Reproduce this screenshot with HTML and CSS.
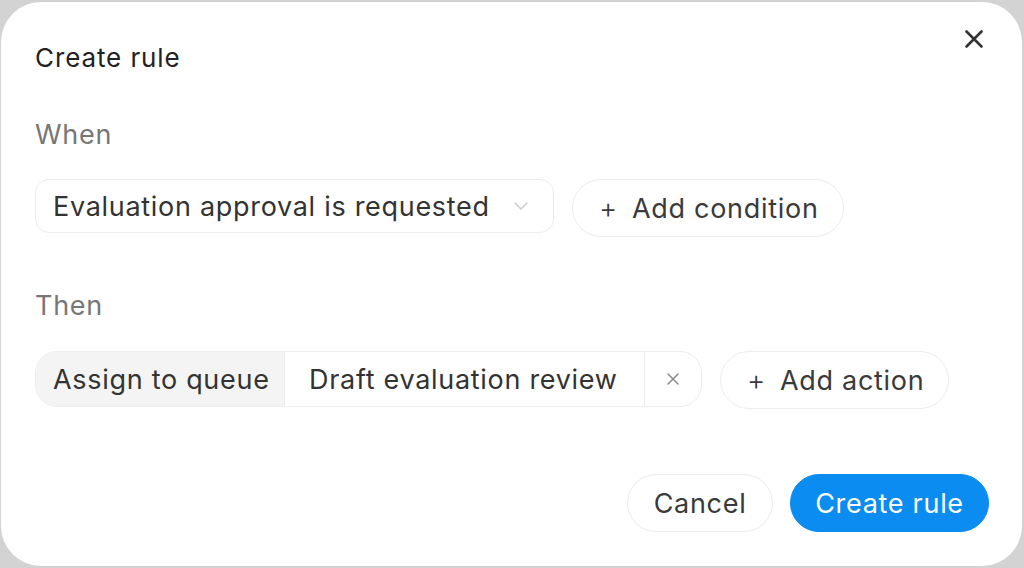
FILE: index.html
```html
<!DOCTYPE html>
<html>
<head>
<meta charset="utf-8">
<link rel="stylesheet" href="styles.css">
</head>
<body>
<div class="dialog">
  <button class="close" aria-label="Close">
    <svg width="20" height="20" viewBox="0 0 20 20"><path d="M2.5 2.5L17.5 17.5M17.5 2.5L2.5 17.5" stroke="#333" stroke-width="2.6" stroke-linecap="round"/></svg>
  </button>
  <h1 class="title">Create rule</h1>
  <div class="label label-when">When</div>
  <div class="row row-when">
    <div class="select">
      <span class="select-text">Evaluation approval is requested</span>
      <svg class="chev" width="14" height="8" viewBox="0 0 14 8"><path d="M1 1L7 7L13 1" fill="none" stroke="#cfcfcf" stroke-width="1.6" stroke-linecap="round" stroke-linejoin="round"/></svg>
    </div>
    <button class="pill add-cond"><span class="plus">+</span>Add condition</button>
  </div>
  <div class="label label-then">Then</div>
  <div class="row row-then">
    <div class="group">
      <div class="seg seg-type">Assign to queue</div>
      <div class="seg seg-value">Draft evaluation review</div>
      <div class="seg seg-x">
        <svg width="12" height="12" viewBox="0 0 12 12"><path d="M1 1L11 11M11 1L1 11" stroke="#8a8a8a" stroke-width="1.5" stroke-linecap="round"/></svg>
      </div>
    </div>
    <button class="pill add-action"><span class="plus">+</span>Add action</button>
  </div>
  <div class="footer">
    <button class="pill cancel">Cancel</button>
    <button class="pill primary">Create rule</button>
  </div>
</div>
</body>
</html>
```

FILE: styles.css
```css
* { box-sizing: border-box; }
html, body { margin: 0; padding: 0; }
body {
  background: #d3d3d3;
  font-family: "Inter", "Noto Sans", sans-serif;
  width: 1024px;
  height: 568px;
  overflow: hidden;
  padding: 2px 2px 2px 1px;
}
.dialog {
  position: relative;
  background: #fff;
  height: 564px;
  border-radius: 40px;
  padding: 38px 33px 0 34px;
  color: #333;
  font-size: 27px;
  letter-spacing: 0.7px;
  white-space: nowrap;
}
.close {
  position: absolute;
  top: 27px;
  right: 38px;
  width: 20px;
  height: 20px;
  padding: 0;
  border: 0;
  background: none;
  display: flex;
}
.title {
  margin: 0;
  font-size: 26px;
  font-weight: 400;
  line-height: 36px;
  letter-spacing: 0.9px;
  color: #222;
}
.label {
  line-height: 36px;
  color: #777;
  font-size: 27px;
}
.label-when { margin-top: 41px; }
.label-then { margin-top: 51px; }
.row {
  display: flex;
  align-items: flex-start;
  gap: 18px;
  margin-top: 26px;
}
.row-then { margin-top: 27px; }
.select {
  display: flex;
  align-items: center;
  flex: none;
  height: 54px;
  width: 519px;
  border: 1.5px solid #ececec;
  border-radius: 14px;
  padding: 0 25px 0 17px;
  justify-content: space-between;
  color: #333;
}
.pill {
  flex: none;
  font-family: inherit;
  font-size: 27px;
  letter-spacing: 0.7px;
  white-space: nowrap;
  color: #3a3a3a;
  background: #fff;
  border: 1.5px solid #ececec;
  border-radius: 30px;
  height: 58px;
  display: flex;
  align-items: center;
  padding: 0 24px 0 26px;
}
.plus {
  font-size: 28px;
  font-weight: 300;
  margin-right: 14px;
}
.add-cond { width: 272px; }
.group {
  display: flex;
  flex: none;
  height: 56px;
  border: 1.5px solid #ececec;
  border-radius: 22px;
  overflow: hidden;
}
.seg {
  display: flex;
  align-items: center;
  flex: none;
  height: 100%;
  color: #333;
}
.seg-type {
  background: #f4f4f4;
  padding: 0 14px 0 17px;
  width: 249px;
  border-right: 1.5px solid #ececec;
}
.seg-value {
  padding: 0 20px 0 24px;
  width: 360px;
  border-right: 1.5px solid #ececec;
}
.seg-x {
  width: 56px;
  justify-content: center;
}
.add-action { width: 229px; }
.footer {
  display: flex;
  justify-content: flex-end;
  gap: 17px;
  margin-top: 65px;
}
.cancel { width: 146px; justify-content: center; padding: 0; }
.primary {
  width: 199px;
  justify-content: center;
  padding: 0;
  background: #0a8cf0;
  border-color: #0a8cf0;
  color: #fff;
}
```
